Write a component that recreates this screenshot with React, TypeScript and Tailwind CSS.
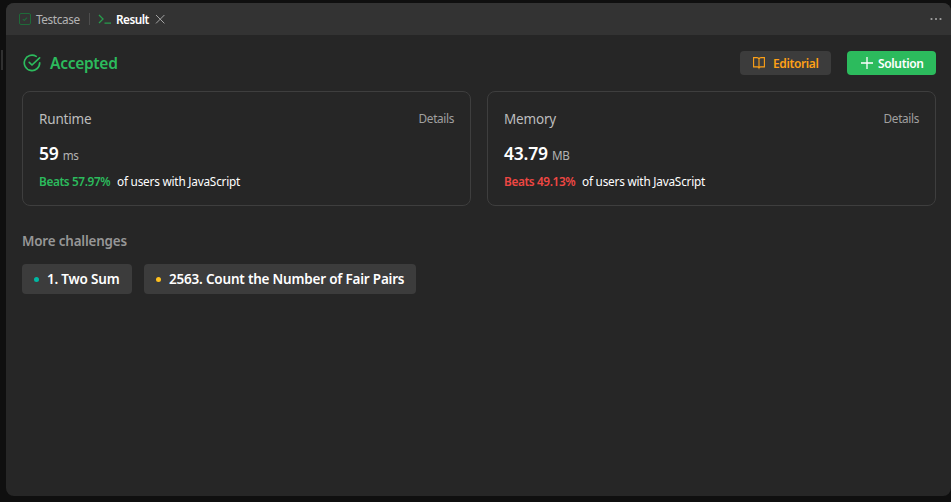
import React from "react";

function CheckCircle() {
  return (
    <svg className="h-[18px] w-[18px] shrink-0" viewBox="0 0 18 18" fill="none" stroke="#2cbb5d" strokeWidth="1.7" strokeLinecap="round" strokeLinejoin="round">
      <path d="M13.2 2.4A7.7 7.7 0 1 0 16.7 8.8" />
      <path d="M6.2 8.4l2.8 2.6L16.6 3.9" />
    </svg>
  );
}

function Tabs() {
  return (
    <header className="flex h-8 shrink-0 items-center bg-[#333333] pr-[9px] pl-3 text-[12px]">
      <svg className="mr-1 h-[14px] w-[14px] shrink-0" viewBox="0 0 14 14" fill="none" stroke="#1f6a39" strokeWidth="1">
        <rect x="1.5" y="1.5" width="11" height="11" rx="1.5" />
        <path d="M4.8 7.2l1.5 1.3 2.8-2.8" strokeWidth="1.1" />
      </svg>
      <span className="w-[53px] pt-[2px] text-[11.8px] tracking-[-0.4px] text-[#b3b3b3]">Testcase</span>
      <span className="h-3 w-px bg-[#4d4d4d]" />
      <svg className="mr-1 ml-2 h-[14px] w-[14px] shrink-0" viewBox="0 0 14 14" fill="none" stroke="#279c4c" strokeWidth="1.3">
        <path d="M1 3l4 4-4 4M6.5 11.2H13" />
      </svg>
      <span className="w-[38px] pt-[2px] text-[11.8px] font-semibold tracking-[-0.55px] text-white">Result</span>
      <svg className="h-[12px] w-[12px] shrink-0" viewBox="0 0 12 12" stroke="#a3a3a3" strokeWidth="1">
        <path d="M2 2l8.4 8.4M10.4 2L2 10.4" />
      </svg>
      <svg className="ml-auto h-3 w-3 shrink-0" viewBox="0 0 12 12" fill="#a3a3a3">
        <circle cx="1.5" cy="6" r="1.1" />
        <circle cx="6" cy="6" r="1.1" />
        <circle cx="10.5" cy="6" r="1.1" />
      </svg>
    </header>
  );
}

type CardProps = { title: string; value: string; unit: string; beats: string; tone: string };

function StatCard({ title, value, unit, beats, tone }: CardProps) {
  return (
    <section className="h-[115px] flex-1 rounded-lg border border-[#3e3e3e] px-4 pt-4">
      <div className="flex h-[22px] items-center justify-between">
        <h2 className="pt-px text-[13.5px] tracking-[-0.18px] text-[#bdbdbd]">{title}</h2>
        <span className="text-[11.8px] tracking-[-0.35px] text-[#a0a0a0]">Details</span>
      </div>
      <div className="mt-[11px] flex h-6 items-baseline gap-1 leading-6">
        <span className="text-[17.5px] font-semibold tracking-[-0.2px] text-white">{value}</span>
        <span className="text-[11.7px] tracking-[-0.2px] text-[#b3b3b3]">{unit}</span>
      </div>
      <div className="mt-2 flex h-4 items-center text-[11.8px] leading-4">
        <span className={`w-[78px] font-semibold tracking-[-0.38px] whitespace-nowrap ${tone}`}>{beats}</span>
        <span className="tracking-[-0.22px] whitespace-nowrap text-white">of users with JavaScript</span>
      </div>
    </section>
  );
}

function Challenge({ title, dot, width }: { title: string; dot: string; width: string }) {
  return (
    <a className={`flex h-[30px] items-center rounded bg-[#3c3c3c] pl-3 ${width}`}>
      <span className={`mr-2 h-[5px] w-[5px] rounded-full ${dot}`} />
      <span className="text-[13.5px] font-semibold tracking-[-0.2px] whitespace-nowrap text-white">{title}</span>
    </a>
  );
}

export default function App() {
  return (
    <div className="flex h-[502px] w-[951px] overflow-hidden bg-[#0f0f0f] pt-[3px] pb-[6px] font-['Noto_Sans','Open_Sans',sans-serif]">
      <div className="w-[6px] shrink-0 pt-[47px] pl-px">
        <div className="h-5 w-[2px] bg-[#303030]" />
      </div>
      <main className="flex flex-1 flex-col overflow-hidden rounded-lg bg-[#262626]">
        <Tabs />
        <div className="pt-4 pr-[15px] pl-4">
          <div className="flex h-6 items-center">
            <div className="flex items-center gap-[9px] pl-px">
              <CheckCircle />
              <h1 className="pt-[2px] text-[15.5px] font-semibold tracking-[-0.28px] text-[#2cbb5d]">Accepted</h1>
            </div>
            <button className="ml-auto flex h-6 w-[91px] items-center rounded bg-[#3c3c3c] pl-3 text-[12px] font-semibold text-[#ffa116]">
              <svg className="mr-[7px] h-[14px] w-[14px] shrink-0" viewBox="0 0 14 14" fill="none" stroke="#ffa116" strokeWidth="1.1">
                <path d="M7 3v8.8M7 3C6.7 2 6 1.6 5 1.6H1.6v9.3h3.7c1 0 1.5.2 1.7.9.2-.7.7-.9 1.7-.9h3.7V1.6H9C8 1.6 7.3 2 7 3z" />
              </svg>
              <span className="pt-[2px] tracking-[-0.38px]">Editorial</span>
            </button>
            <button className="ml-4 flex h-6 w-[89px] items-center rounded bg-[#2cbb5d] pl-[13px] text-[12px] font-semibold text-white">
              <svg className="mr-1 h-[14px] w-[14px] shrink-0" viewBox="0 0 14 14" stroke="white" strokeWidth="1.3">
                <path d="M7 1v12M1 7h12" />
              </svg>
              <span className="pt-[2px] tracking-[-0.35px]">Solution</span>
            </button>
          </div>
          <div className="mt-4 flex gap-4">
            <StatCard title="Runtime" value="59" unit="ms" beats="Beats 57.97%" tone="text-[#2cbb5d]" />
            <StatCard title="Memory" value="43.79" unit="MB" beats="Beats 49.13%" tone="text-[#ef4743]" />
          </div>
          <h2 className="mt-[25px] h-5 text-[13.4px] leading-5 font-semibold tracking-[-0.17px] text-[#979797]">More challenges</h2>
          <div className="mt-[13px] flex gap-3">
            <Challenge title="1. Two Sum" dot="bg-[#00b8a3]" width="w-[110px]" />
            <Challenge title="2563. Count the Number of Fair Pairs" dot="bg-[#ffc01e]" width="w-[272px]" />
          </div>
        </div>
      </main>
    </div>
  );
}
